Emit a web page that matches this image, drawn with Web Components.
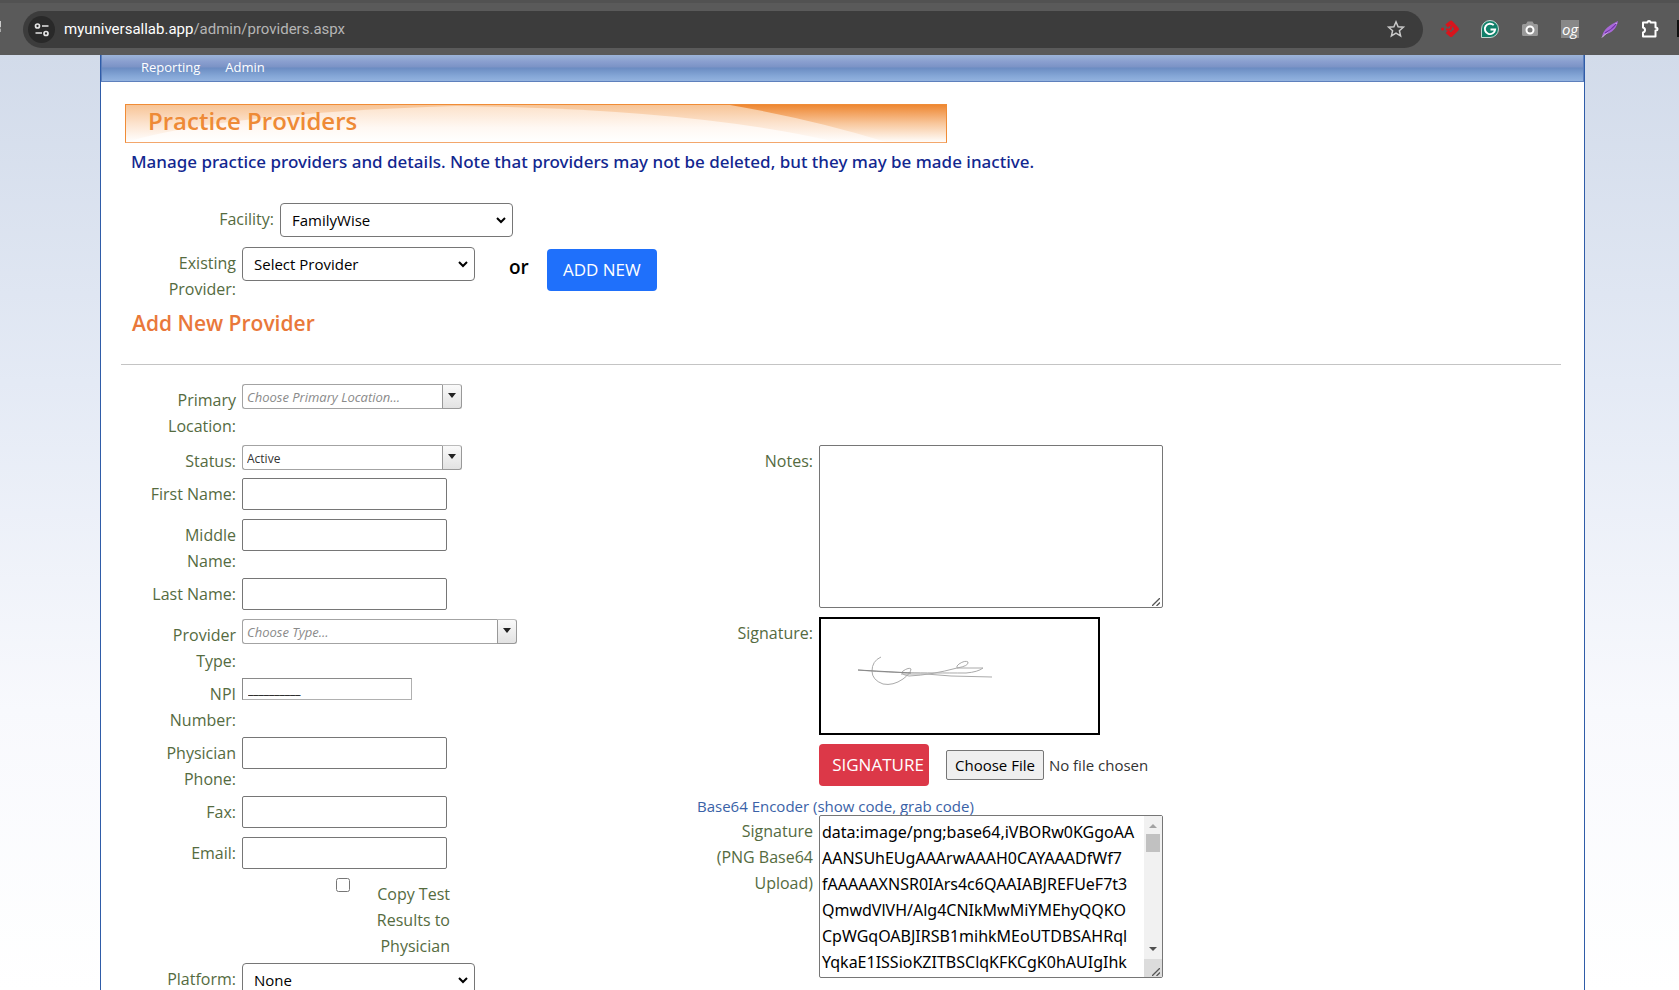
<!DOCTYPE html>
<html lang="en">
<head>
<meta charset="utf-8">
<title>Practice Providers</title>
<style>
html, body { margin: 0; height: 100%; }
body { font-family: "Open Sans", "Noto Sans", sans-serif; font-size: 16px; line-height: 26px; color: #000; overflow: hidden; }
</style>
</head>
<body>
<provider-app></provider-app>
<script>
const define = (name, html, setup) => {
  const template = document.createElement('template');
  template.innerHTML = html;
  customElements.define(name, class extends HTMLElement {
    connectedCallback() {
      if (this.shadowRoot) return;
      this.attachShadow({ mode: 'open' }).append(template.content.cloneNode(true));
      if (setup) setup(this, this.shadowRoot);
    }
  });
};

/* Shared rules of every labelled row */
const rowCss = `
  * { box-sizing: border-box; }
  :host { display: flex; align-items: flex-start; gap: 6px; }
  label { flex: none; width: var(--label-width, 96px); padding: 3px 0 4px; text-align: right; color: #556b3f; }
  input, select, textarea, button { font: inherit; color: #000; margin: 0; }
`;
const setLabel = (host, root) => { root.querySelector('label').textContent = host.getAttribute('label'); };

define('browser-bar', `
  <style>
    :host { display: flex; align-items: center; flex: none; height: 55px; border-top: 3px solid #525252; background: #5a5a5a; padding: 0 0 0 23px; gap: 18px; box-sizing: border-box; position: relative; }
    .omni { flex: 1; display: flex; align-items: center; gap: 9px; height: 37px; border-radius: 19px; background: #3c3c3c; padding: 0 18px 0 5px; box-sizing: border-box; font: 15px/20px Roboto, sans-serif; color: #b5b5b5; }
    .omni a { flex: 1; color: inherit; text-decoration: none; }
    .omni b { font-weight: 400; color: #fff; }
    .info { display: block; width: 27px; height: 27px; border: 0; padding: 0; border-radius: 50%; background: #292929; }
    .star { border: 0; padding: 0; background: none; width: 18px; height: 18px; }
    .icons { display: flex; align-items: center; gap: 22px; margin-right: 20px; }
    .icons button { border: 0; background: none; padding: 0; width: 18px; height: 18px; }
    svg { display: block; overflow: visible; }
    .icons .og { font: italic 15px/17px "Open Sans", sans-serif; color: #fff; background: #888; text-align: center; }
    .edge { position: absolute; right: 0; top: 17px; width: 2px; height: 17px; background: #111; }
    .mark { position: absolute; left: 0; top: 18px; width: 1px; height: 11px; background: linear-gradient(#ccc 55%, #777 55% 75%, #aaa 75%); }
  </style>
  <span class="mark"></span>
  <div class="omni">
    <button class="info" aria-label="Site information"><svg width="27" height="27" fill="none" stroke="#e4e4e4" stroke-width="1.7"><circle cx="9.5" cy="10" r="2"/><path d="M14 10h6.500M7.500 17h6.500"/><circle cx="18" cy="17.500" r="2"/></svg></button>
    <a href="#"><b>myuniversallab.app</b>/admin/providers.aspx</a>
    <button class="star" aria-label="Bookmark"><svg width="18" height="18" fill="none" stroke="#c9c9c9" stroke-width="1.500"><path d="M9 1.800l2.100 4.900 5.300.5-4 3.500 1.200 5.200L9 13.100l-4.600 2.800 1.200-5.200-4-3.500 5.300-.5z"/></svg></button>
  </div>
  <div class="icons">
    <button aria-label="Extension"><svg width="18" height="18"><circle cx="1.600" cy="9" r="1.600" fill="#d8141c"/><path d="M5.500 6L10 2.500 16 9l-6 6-4-3.500" fill="none" stroke="#d8141c" stroke-width="4" stroke-linejoin="round"/><path d="M5 9.500h5.500M10 6v3" fill="none" stroke="#d8141c" stroke-width="2"/></svg></button>
    <button aria-label="Grammarly"><svg width="18" height="18"><path d="M9 .5a8.500 8.500 0 1 1 0 17H.5V9A8.500 8.500 0 0 1 9 .5z" fill="#11806a" stroke="#c5d8d3"/><path d="M12.700 5.200a5.200 5.200 0 1 0 1.500 4.300H9.500M14 9.500l-1 3" fill="none" stroke="#fff" stroke-width="1.900"/></svg></button>
    <button aria-label="Screenshot"><svg width="18" height="18"><path d="M2.500 4H5l1.500-2.500h5L13 4h2.500A1.500 1.500 0 0 1 17 5.500v9a1.500 1.500 0 0 1-1.500 1.500h-13A1.500 1.500 0 0 1 1 14.500v-9A1.500 1.500 0 0 1 2.500 4z" fill="#999"/><circle cx="9" cy="10" r="3.500" fill="#777" stroke="#fff" stroke-width="2"/></svg></button>
    <button class="og" aria-label="Open Graph">og</button>
    <button aria-label="Feather"><svg width="18" height="18"><path d="M1 17C2 9 9 5 17 1c-1 7-6 12-13 13.500z" fill="#a868d8"/><path d="M1 17.500C5 13 11 9 15.500 3" fill="none" stroke="#e2c9f5"/><path d="M4 13C8 11 12 8 15 4" fill="none" stroke="#6f2da8" stroke-width="1.200"/></svg></button>
    <button aria-label="Extensions"><svg width="18" height="18" fill="none" stroke="#fff" stroke-width="2" stroke-linejoin="round"><path d="M2 2.500h4.500q0-1.500 1.500-1.500t1.500 1.500H14.500v5q2 0 2 1.500t-2 1.500V16.500H2v-4q2-.5 2-2.500T2 7.500z"/></svg></button>
  </div>
  <span class="edge"></span>
`);

define('nav-bar', `
  <style>
    :host { display: block; height: 27px; box-sizing: border-box; border: 1px solid #5e80bc; border-top: 0; background: linear-gradient(#9db5da 0, #8a9fcf 25%, #7b93c6 46%, #6b8cc2 50%, #84a6d6 80%, #93b3df 100%); }
    nav { display: flex; gap: 25px; padding: 0 39px; font-size: 13px; line-height: 25px; }
    a { color: #fff; text-decoration: none; }
  </style>
  <nav><a href="#">Reporting</a><a href="#">Admin</a></nav>
`);

define('title-banner', `
  <style>
    :host { display: grid; width: 822px; max-width: 100%; height: 39px; box-sizing: border-box; border: 1px solid #f08c36; border-bottom-color: #f3a76c; }
    svg, h1 { grid-area: 1 / 1; }
    svg { width: 100%; height: 37px; display: block; }
    h1 { margin: 0 0 0 22px; font-size: 24px; line-height: 32px; font-weight: 600; color: #ee8a36; }
  </style>
  <svg viewBox="0 0 820 37" preserveAspectRatio="none" aria-hidden="true">
    <defs>
      <linearGradient id="deep" x2="0" y2="1"><stop offset="0" stop-color="#ee8732"/><stop offset=".5" stop-color="#f8c79c"/><stop offset="1" stop-color="#fffdfb"/></linearGradient>
      <linearGradient id="mid" x2="0" y2="1"><stop offset="0" stop-color="#f7c496"/><stop offset=".5" stop-color="#fce3ce"/><stop offset="1" stop-color="#fff"/></linearGradient>
      <linearGradient id="pale" x2="0" y2="1"><stop offset="0" stop-color="#fce2cb"/><stop offset=".6" stop-color="#fff8f3"/><stop offset="1" stop-color="#fff"/></linearGradient>
    </defs>
    <path d="M0 0h820v37H0z" fill="url(#deep)"/>
    <path d="M0 0H604Q690 15 760 37H0z" fill="url(#mid)"/>
    <path d="M0 37Q100 8 330 1Q570 4 710 37z" fill="url(#pale)"/>
  </svg>
  <h1><slot></slot></h1>
`);

define('text-field', `
  <style>${rowCss}
    input { width: 205px; height: 32px; margin-bottom: 9px; border: 1px solid #767676; border-radius: 2px; background: #fff; padding: 0 5px; }
    :host([compact]) input { width: 170px; height: 22px; border-color: #8a8a8a #b0b0b0 #b0b0b0 #8a8a8a; border-radius: 0; font-size: 12px; line-height: 20px; }
  </style>
  <label for="field"></label><input id="field" type="text">
`, (host, root) => { setLabel(host, root); root.querySelector('input').value = host.getAttribute('value') || ''; });

define('select-field', `
  <style>${rowCss}
    select { appearance: none; width: 233px; height: 34px; border: 1px solid #767676; border-radius: 4px; padding: 0 26px 0 11px; font-size: 15px;
      background: #fff url('data:image/svg+xml,<svg xmlns="http://www.w3.org/2000/svg" width="10" height="7"><path d="M1 1l4 4 4-4" fill="none" stroke="black" stroke-width="2"/></svg>') no-repeat right 6px center; }
  </style>
  <label for="field"></label><select id="field"><option></option></select>
`, (host, root) => { setLabel(host, root); root.querySelector('option').textContent = host.getAttribute('value'); });

define('combo-field', `
  <style>${rowCss}
    .combo { display: flex; width: 220px; height: 25px; margin-bottom: 8px; }
    :host([wide]) .combo { width: 275px; }
    input { flex: 1; min-width: 0; border: 1px solid #a3a3a3; border-right: 0; border-radius: 3px 0 0 3px; padding: 2px 4px 0; font-size: 12px; line-height: 16px; color: #333; background: #fff; }
    input:placeholder-shown { font-size: 13px; padding-top: 0; }
    input::placeholder { font-style: italic; color: #8a8a8a; opacity: 1; }
    button { flex: none; display: grid; place-items: center; width: 20px; padding: 0 0 2px; border: 1px solid #999; border-radius: 0 3px 3px 0; border-top-color: #bbb; background: linear-gradient(#fafafa, #e2e2e2); }
    :host([roomy]) { padding-bottom: 2px; }
  </style>
  <label for="field"></label>
  <div class="combo"><input id="field" type="text" role="combobox" aria-expanded="false"><button aria-label="Open list"><svg width="8" height="5"><path d="M0 0h8L4 5z" fill="#222"/></svg></button></div>
`, (host, root) => {
  setLabel(host, root);
  const input = root.querySelector('input');
  input.placeholder = host.getAttribute('placeholder') || '';
  input.value = host.getAttribute('value') || '';
});

define('check-field', `
  <style>
    :host { display: flex; align-items: flex-start; padding-left: 196px; box-sizing: border-box; }
    input, label { box-sizing: border-box; }
    input { flex: none; width: 14px; height: 14px; margin: 0; }
    label { width: 100px; padding: 3px 0 4px; text-align: right; color: #556b3f; }
  </style>
  <input id="field" type="checkbox"><label for="field"><slot></slot></label>
`);

define('area-field', `
  <style>${rowCss}
    .box { position: relative; display: block; width: 344px; }
    textarea { display: block; width: 100%; height: 163px; border: 1px solid #767676; border-radius: 2px; padding: 3px 2px; background: #fff; resize: none; overflow: hidden; white-space: pre; font-family: "Noto Sans", sans-serif; }
    .bar { display: none; position: absolute; top: 1px; right: 1px; bottom: 1px; width: 18px; flex-direction: column; align-items: center; background: linear-gradient(#f1f1f1, #f1f1f1) no-repeat 0 0 / 100% 143px #dcdcdc; }
    :host([long]) .bar { display: flex; }
    .thumb { width: 14px; height: 18px; margin: 6px 0 95px; background: #c1c1c1; }
    .up { margin-top: 8px; }
    .grip { position: absolute; right: 3px; bottom: 2px; }
    svg { display: block; }
  </style>
  <label for="field"></label>
  <div class="box">
    <textarea id="field" spellcheck="false"></textarea>
    <div class="bar" aria-hidden="true">
      <svg class="up" width="8" height="4"><path d="M0 4h8L4 0z" fill="#a3a3a3"/></svg>
      <span class="thumb"></span>
      <svg width="8" height="4"><path d="M0 0h8L4 4z" fill="#505050"/></svg>
    </div>
    <svg class="grip" width="8" height="8" aria-hidden="true"><path d="M0 8L8 0M4.500 8L8 4.500" fill="none" stroke="#555" stroke-width="1.300"/></svg>
  </div>
`, (host, root) => { setLabel(host, root); root.querySelector('textarea').value = host.textContent.trim(); });

define('signature-field', `
  <style>${rowCss}
    .pad { width: 281px; height: 118px; border: 2px solid #000; background: #fff; }
    svg { display: block; }
  </style>
  <label></label>
  <div class="pad" role="img" aria-label="Handwritten signature">
    <svg width="277" height="114" fill="none" stroke="#aaa" stroke-width="1">
      <path d="M37 51C70 54 100 54 145 54Q157 53 162 49L136 49Q135 47 138 45Q144 41 147 43Q148 47 136 49Q110 56 88 57Q78 55 82 52Q88 48 90 50Q90 54 82 60Q72 67 62 65Q51 61 51 52Q51 42 60 38"/>
      <path d="M80 55Q105 54 130 57L171 58"/>
      <path d="M37 51L90 54" stroke="#888"/>
    </svg>
  </div>
`, setLabel);

define('action-button', `
  <style>
    :host { display: block; }
    button { display: block; width: 110px; height: 42px; padding: 0; border: 0; border-radius: 4px; background: #1f70fb; color: #fff; font: inherit; font-size: 17px; line-height: 42px; text-align: center; }
    :host([danger]) button { background: #dc3848; padding-left: 8px; }
  </style>
  <button type="button"><slot></slot></button>
`);

define('file-picker', `
  <style>
    :host { display: block; }
    input { display: block; width: 240px; font: inherit; font-size: 15px; line-height: 26px; color: #333; }
    input::file-selector-button { height: 30px; box-sizing: border-box; padding: 0 8px; margin: 0 5px 0 0; border: 1px solid #767676; border-radius: 2px; background: #efefef; color: #000; font: inherit; }
  </style>
  <input type="file" aria-label="Signature file">
`);

define('provider-form', `
  <style>
    :host { display: grid; grid-template-columns: 2fr 3fr; }
    .left { padding-left: 19px; }
    .right { --label-width: 104px; padding-top: 61px; }
    .stack { display: grid; gap: 9px; padding-left: 12px; }
    .actions { display: flex; align-items: center; gap: 17px; padding-left: 110px; }
    a { display: block; width: max-content; margin-top: 11px; font-size: 15px; line-height: 18px; color: #3a62a7; text-decoration: none; }
    area-field[long] { margin-left: 12px; }
  </style>
  <div class="left">
    <combo-field roomy label="Primary Location:" placeholder="Choose Primary Location..."></combo-field>
    <combo-field label="Status:" value="Active"></combo-field>
    <text-field label="First Name:"></text-field>
    <text-field label="Middle Name:"></text-field>
    <text-field label="Last Name:"></text-field>
    <combo-field wide label="Provider Type:" placeholder="Choose Type..."></combo-field>
    <text-field compact label="NPI Number:" value="__________"></text-field>
    <text-field label="Physician Phone:"></text-field>
    <text-field label="Fax:"></text-field>
    <text-field label="Email:"></text-field>
    <check-field>Copy Test Results to Physician</check-field>
    <select-field label="Platform:" value="None"></select-field>
  </div>
  <div class="right">
    <div class="stack">
      <area-field label="Notes:"></area-field>
      <signature-field label="Signature:"></signature-field>
      <div class="actions"><action-button danger>SIGNATURE</action-button><file-picker></file-picker></div>
    </div>
    <a href="#">Base64 Encoder (show code, grab code)</a>
    <area-field long label="Signature (PNG Base64 Upload)">data:image/png;base64,iVBORw0KGgoAA
AANSUhEUgAAArwAAAH0CAYAAADfWf7
fAAAAAXNSR0IArs4c6QAAIABJREFUeF7t3
QmwdVlVH/Alg4CNIkMwMiYMEhyQQKO
CpWGqOABJIRSB1mihkMEoUTDBSAHRql
YqkaE1ISSioKZITBSClqKFKCgK0hAUIgIhk</area-field>
  </div>
`);

define('provider-app', `
  <style>
    :host { display: flex; flex-direction: column; height: 100vh; overflow: hidden; }
    .view { flex: 1; min-height: 0; overflow: hidden; background: linear-gradient(#d2dbea, #e4eaf5 35%, #f8f9fd 70%, #fff); }
    .page { min-height: 100%; margin: 0 94px 0 100px; border: solid #2f5ca8; border-width: 0 1px; background: #fff; }
    main { padding: 22px 23px 0 20px; }
    title-banner { margin-left: 4px; }
    .intro { margin: 6px 0 28px 10px; font-family: "Noto Sans", sans-serif; font-size: 17px; font-weight: 500; color: #12278f; }
    .facility { --label-width: 153px; margin-bottom: 10px; }
    .existing { display: flex; align-items: flex-start; padding-left: 19px; }
    .or { margin: 7px 18px 0 34px; font-size: 19px; font-weight: 600; }
    action-button { margin-top: 2px; }
    h2 { margin: 1px 0 25px 11px; font-size: 21px; line-height: 32px; font-weight: 600; color: #e9783a; }
    hr { margin: 0 0 19px; border: 0; border-top: 1px solid #c4c4c4; }
  </style>
  <browser-bar></browser-bar>
  <div class="view">
    <div class="page">
      <nav-bar></nav-bar>
      <main>
        <title-banner>Practice Providers</title-banner>
        <p class="intro">Manage practice providers and details. Note that providers may not be deleted, but they may be made inactive.</p>
        <select-field class="facility" label="Facility:" value="FamilyWise"></select-field>
        <div class="existing">
          <select-field label="Existing Provider:" value="Select Provider"></select-field>
          <span class="or">or</span>
          <action-button>ADD NEW</action-button>
        </div>
        <h2>Add New Provider</h2>
        <hr>
        <provider-form></provider-form>
      </main>
    </div>
  </div>
`);
</script>
</body>
</html>
